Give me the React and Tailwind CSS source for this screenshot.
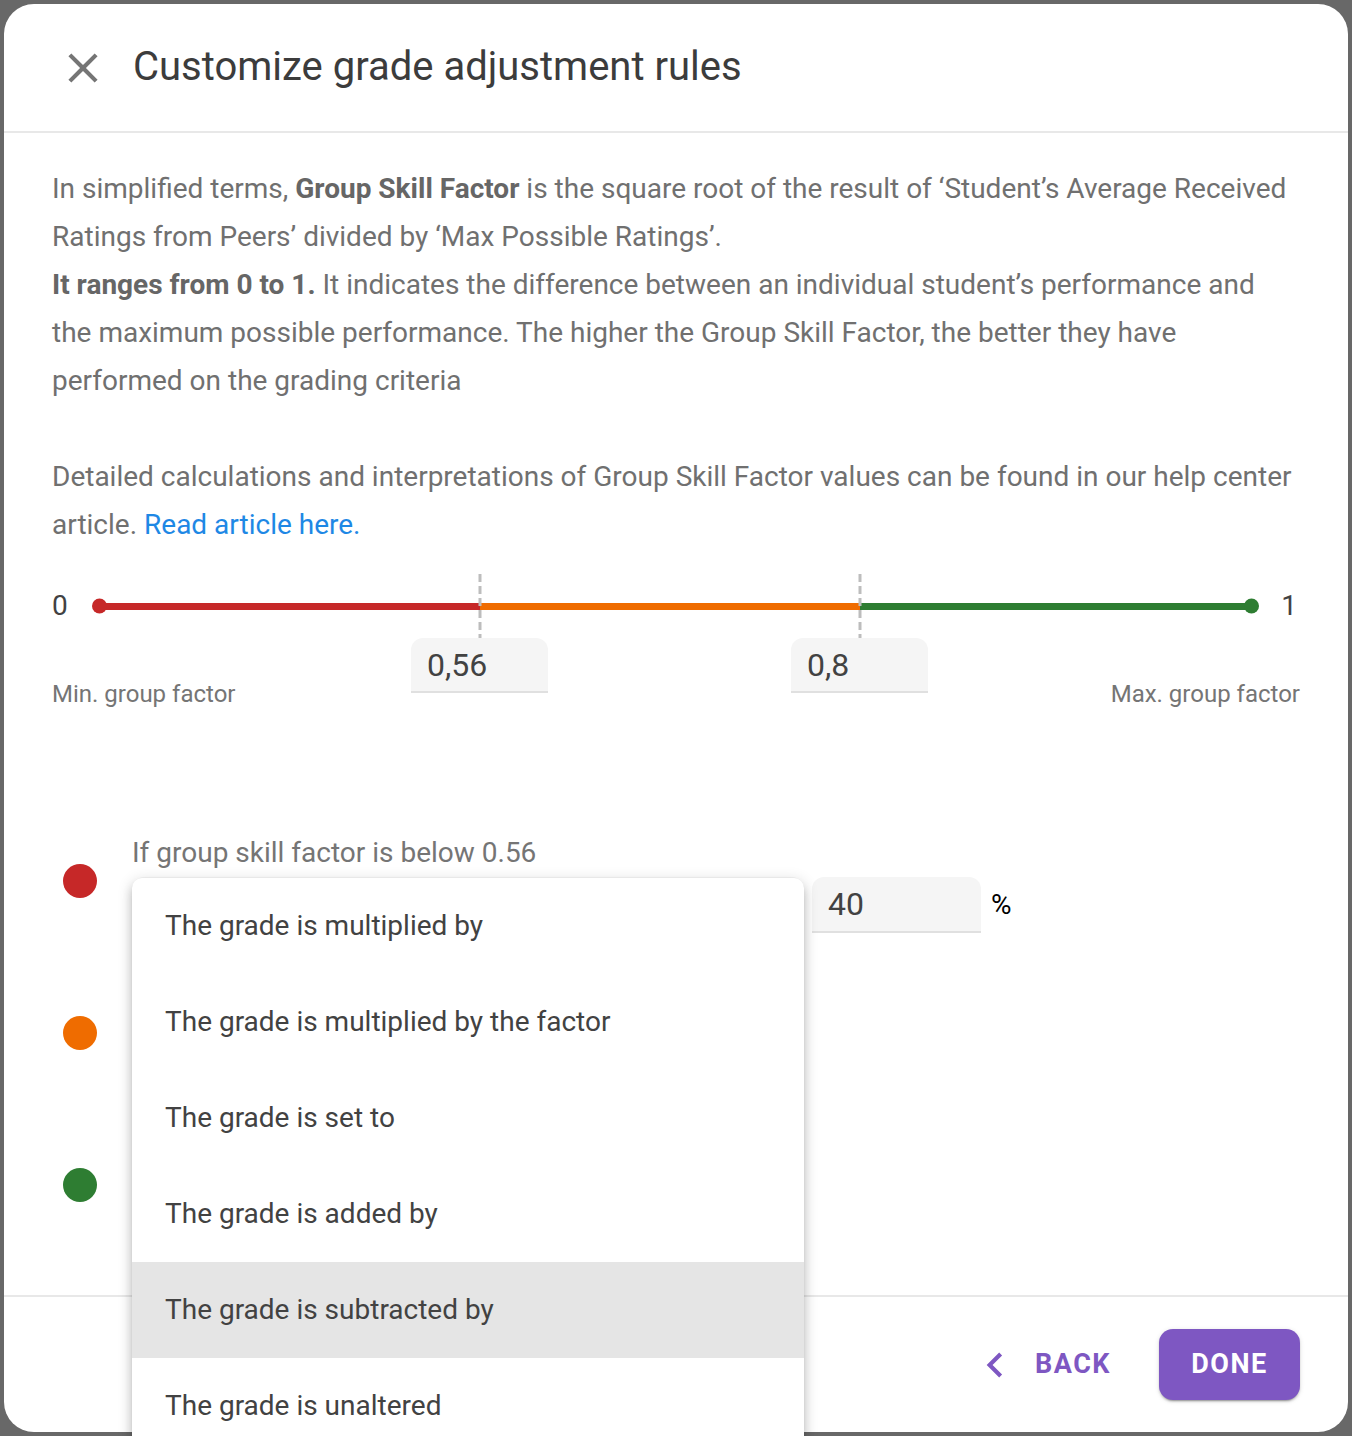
import { useState } from 'react';

const rules = [
  { color: 'bg-[#c62828]', label: 'If group skill factor is below 0.56', value: '40' },
  { color: 'bg-[#ef6c00]', label: 'If group skill factor is between 0.56 and 0.8' },
  { color: 'bg-[#2e7d32]', label: 'If group skill factor is above 0.8' },
];

const options = [
  'The grade is multiplied by',
  'The grade is multiplied by the factor',
  'The grade is set to',
  'The grade is added by',
  'The grade is subtracted by',
  'The grade is unaltered',
];

const DashedMark = () => (
  <svg width="4" height="64" viewBox="0 0 4 64" className="block">
    <line x1="2" y1="0" x2="2" y2="64" stroke="#bdbdbd" strokeWidth="3" strokeDasharray="8 4" />
  </svg>
);

const App = () => {
  const [hovered] = useState(4);

  return (
    <div className="relative w-[1352px] h-[1436px] overflow-hidden bg-[#686868] p-[4px] font-['Roboto',sans-serif]">
      <div className="flex flex-col w-[1344px] h-[1428px] bg-white rounded-[30px] overflow-hidden">
        {/* header */}
        <div className="flex items-center h-[129px] shrink-0 border-b-2 border-[#e8e8e8]">
          <button className="ml-[54px] w-[50px] h-[50px] flex items-center justify-center text-[#757575]">
            <svg width="52" height="52" viewBox="0 0 24 24" fill="currentColor">
              <path d="M19 6.41L17.59 5 12 10.59 6.41 5 5 6.41 10.59 12 5 17.59 6.41 19 12 13.41 17.59 19 19 17.59 13.41 12z" />
            </svg>
          </button>
          <h1 className="ml-[25px] text-[40px] leading-[48px] text-[#3c3c3c] -mt-[2px]">
            Customize grade adjustment rules
          </h1>
        </div>

        {/* body */}
        <div className="flex-1 px-[48px] pt-[32px]">
          <p className="text-[28px] leading-[48px] text-[#707070]">
            In simplified terms, <b className="font-bold text-[#666]">Group Skill Factor</b> is the square root of the result of ‘Student’s Average Received Ratings from Peers’ divided by ‘Max Possible Ratings’.
            <br />
            <b className="font-bold text-[#666]">It ranges from 0 to 1.</b> It indicates the difference between an individual student’s performance and the maximum possible performance. The higher the Group Skill Factor, the better they have performed on the grading criteria
          </p>
          <p className="mt-[48px] text-[28px] leading-[48px] text-[#707070]">
            Detailed calculations and interpretations of Group Skill Factor values can be found in our help center article.{' '}
            <a className="text-[#1e88e5]">Read article here.</a>
          </p>

          {/* slider */}
          <div className="mt-[25px]">
            <div className="grid grid-cols-[47px_1fr_48px] h-[64px] items-center">
              <span className="text-[28px] text-[#424242] leading-none">0</span>
              <div className="relative flex h-[7px] items-center">
                <div className="h-full w-[381px] bg-[#c62828] rounded-l-full" />
                <div className="h-full w-[380px] bg-[#ef6c00]" />
                <div className="h-full flex-1 bg-[#2e7d32] rounded-r-full" />
                <span className="absolute -left-[7px] top-1/2 -translate-y-1/2 w-[15px] h-[15px] rounded-full bg-[#c62828]" />
                <span className="absolute -right-[7px] top-1/2 -translate-y-1/2 w-[15px] h-[15px] rounded-full bg-[#2e7d32]" />
                <span className="absolute left-[379px] -top-[29px]"><DashedMark /></span>
                <span className="absolute left-[759px] -top-[29px]"><DashedMark /></span>
              </div>
              <span className="text-[28px] text-[#424242] leading-none text-right pr-[3px]">1</span>
            </div>
            <div className="relative flex items-end justify-between h-[71px]">
              <span className="text-[24px] leading-[30px] text-[#757575]">Min. group factor</span>
              <span className="text-[24px] leading-[30px] text-[#757575]">Max. group factor</span>
              <div className="absolute top-0 left-[359px] w-[137px] h-[55px] bg-[#f5f5f5] rounded-t-[12px] border-b-2 border-[#e0e0e0] pl-[16px] flex items-center text-[32px] text-[#424242]">
                0,56
              </div>
              <div className="absolute top-0 left-[739px] w-[137px] h-[55px] bg-[#f5f5f5] rounded-t-[12px] border-b-2 border-[#e0e0e0] pl-[16px] flex items-center text-[32px] text-[#424242]">
                0,8
              </div>
            </div>
          </div>

          {/* rules */}
          <div className="mt-[120px] flex flex-col gap-[48px]">
            {rules.map((r) => (
              <div key={r.label} className="flex items-center">
                <span className={`ml-[11px] w-[34px] h-[34px] rounded-full ${r.color}`} />
                <div className="ml-[35px] flex flex-col">
                  <span className="text-[28px] leading-[48px] text-[#757575]">{r.label}</span>
                  <div className="flex items-center">
                    <div className="w-[672px] h-[56px] bg-[#f5f5f5] rounded-t-[12px] border-b-2 border-[#e0e0e0]" />
                    {r.value && (
                      <>
                        <div className="ml-[8px] w-[169px] h-[56px] bg-[#f5f5f5] rounded-t-[12px] border-b-2 border-[#e0e0e0] pl-[16px] flex items-center text-[32px] text-[#424242]">
                          {r.value}
                        </div>
                        <span className="ml-[10px] text-[28px] text-black">%</span>
                      </>
                    )}
                  </div>
                </div>
              </div>
            ))}
          </div>
        </div>

        {/* footer */}
        <div className="h-[137px] shrink-0 border-t-2 border-[#e8e8e8] flex items-center justify-end pr-[48px]">
          <button className="flex items-center text-[#7e57c2] font-bold text-[27px] tracking-[1.5px] h-[71px] px-[12px]">
            <svg width="50" height="50" viewBox="0 0 24 24" fill="currentColor" className="-ml-[30px]">
              <path d="M15.41 7.41L14 6l-6 6 6 6 1.41-1.41L10.83 12z" />
            </svg>
            <span className="ml-[15px]">BACK</span>
          </button>
          <button className="ml-[36px] w-[141px] h-[71px] rounded-[14px] bg-[#7e57c2] text-white font-bold text-[27px] tracking-[1.5px] shadow-[0_3px_1px_-2px_rgba(0,0,0,0.2),0_2px_2px_0_rgba(0,0,0,0.14),0_1px_5px_0_rgba(0,0,0,0.12)]">
            DONE
          </button>
        </div>
      </div>

      {/* open dropdown menu */}
      <ul className="absolute left-[132px] top-[878px] w-[672px] h-[560px] bg-white rounded-t-[10px] shadow-[0_5px_5px_-3px_rgba(0,0,0,0.2),0_8px_10px_1px_rgba(0,0,0,0.14),0_3px_14px_2px_rgba(0,0,0,0.12)]">
        {options.map((o, i) => (
          <li
            key={o}
            className={`h-[96px] flex items-center pl-[33px] text-[28px] text-[#424242] ${i === hovered ? 'bg-[#e5e5e5]' : ''}`}
          >
            {o}
          </li>
        ))}
      </ul>
    </div>
  );
};

export default App;
